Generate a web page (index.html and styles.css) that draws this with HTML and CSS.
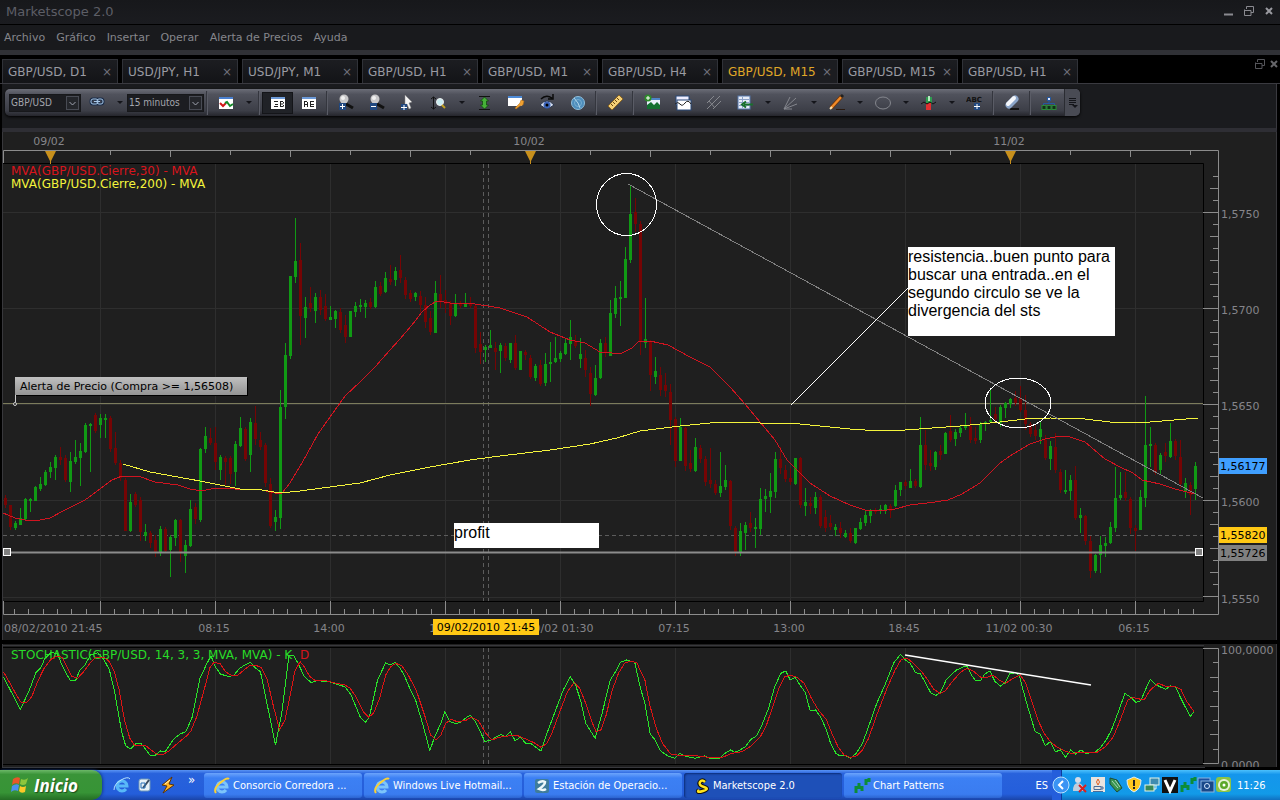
FILE: index.html
```html
<!DOCTYPE html>
<html lang="es">

<head>
    <meta charset="UTF-8">
    <meta name="viewport" content="width=device-width, initial-scale=1.0">
    <title>Marketscope 2.0</title>
    <link rel="stylesheet" href="styles.css">
</head>

<body>
    <header class="titlebar">
        <h1>Marketscope 2.0</h1>
        <div class="window-buttons">
            <button aria-label="Minimizar"><svg width="12" height="12"><path d="M1 9.500h9" stroke="#8a8a90" stroke-width="2"/></svg></button>
            <button aria-label="Restaurar"><svg width="12" height="12"><path d="M3.500 4V1.500h7v6H8M1 5.500h7v5H1.500v-6" fill="none" stroke="#8a8a90"/></svg></button>
            <button aria-label="Cerrar"><svg width="12" height="12"><path d="M3 3l6 6M9 3l-6 6" stroke="#9a9aa0" stroke-width="2"/></svg></button>
        </div>
    </header>

    <nav class="menubar">
        <a href="#">Archivo</a>
        <a href="#">Gráfico</a>
        <a href="#">Insertar</a>
        <a href="#">Operar</a>
        <a href="#">Alerta de Precios</a>
        <a href="#">Ayuda</a>
    </nav>

    <div class="tabs">
        <div class="tab"><a href="#">GBP/USD, D1</a><button aria-label="Cerrar">×</button></div>
        <div class="tab"><a href="#">USD/JPY, H1</a><button aria-label="Cerrar">×</button></div>
        <div class="tab"><a href="#">USD/JPY, M1</a><button aria-label="Cerrar">×</button></div>
        <div class="tab"><a href="#">GBP/USD, H1</a><button aria-label="Cerrar">×</button></div>
        <div class="tab"><a href="#">GBP/USD, M1</a><button aria-label="Cerrar">×</button></div>
        <div class="tab"><a href="#">GBP/USD, H4</a><button aria-label="Cerrar">×</button></div>
        <div class="tab active"><a href="#">GBP/USD, M15</a><button aria-label="Cerrar">×</button></div>
        <div class="tab"><a href="#">GBP/USD, M15</a><button aria-label="Cerrar">×</button></div>
        <div class="tab"><a href="#">GBP/USD, H1</a><button aria-label="Cerrar">×</button></div>
        <div class="tabs-buttons">
            <button aria-label="Restaurar gráfico"><svg width="12" height="12"><path d="M3.500 4V1.500h7v6H8M1 5.500h7v5H1.500v-6" fill="none" stroke="#55555a"/></svg></button>
            <button aria-label="Cerrar gráfico"><svg width="12" height="12"><path d="M3 3l6 6M9 3l-6 6" stroke="#66666a" stroke-width="2"/></svg></button>
        </div>
    </div>

    <div class="toolbar-area">
        <div class="toolbar">
            <span class="combo combo-symbol">
                <select aria-label="Símbolo"><option>GBP/USD</option><option>USD/JPY</option></select>
                <svg width="13" height="14"><rect x=".5" y=".5" width="12" height="13" fill="#24262b" stroke="#484b54"/><path d="M3.500 6l3 3 3-3" fill="none" stroke="#a0a4b0"/></svg>
            </span>
            <button class="tool" aria-label="Vincular"><svg width="18" height="18"><g fill="none" stroke="#1a2c48" stroke-width="3"><rect x="3" y="5" width="7" height="5" rx="2"/><rect x="9" y="5" width="6" height="5" rx="2"/></g><g fill="none" stroke="#a8c8e8"><rect x="3" y="5" width="7" height="5" rx="2"/><rect x="9" y="5" width="6" height="5" rx="2"/><path d="M6 7.500h6"/></g></svg></button>
            <button class="drop" aria-label="Opciones de vínculo"></button>
            <span class="combo combo-period">
                <select aria-label="Periodo"><option>15 minutos</option><option>1 hora</option></select>
                <svg width="13" height="14"><rect x=".5" y=".5" width="12" height="13" fill="#24262b" stroke="#484b54"/><path d="M3.500 6l3 3 3-3" fill="none" stroke="#a0a4b0"/></svg>
            </span>
            <span class="sep"></span>
            <button class="tool" aria-label="Tipo de gráfico"><svg width="18" height="18"><rect x="2" y="3" width="14" height="12" fill="#fff"/><rect x="2" y="3" width="14" height="2" fill="#4a80d0"/><path d="M3 9l3 3 3-3" fill="none" stroke="#d01818" stroke-width="2"/><path d="M8 9l2-1 3 4 3-2" fill="none" stroke="#128a28" stroke-width="2"/></svg></button>
            <button class="drop" aria-label="Más tipos"></button>
            <span class="sep"></span>
            <button class="tool pressed" aria-label="Precio de venta"><svg width="18" height="18"><rect x="2" y="3" width="14" height="12" fill="#fff"/><path d="M2 4h14" stroke="#6c9ad8" stroke-width="2"/><path d="M5 7.500h4M6 10.500h3M5 12.500h4M11.500 7v6M11 7.500h3M11 10h3M11 12.500h3M14.500 8v1.500M14.500 11v1.500" stroke="#222"/></svg></button>
            <button class="tool" aria-label="Precio de compra"><svg width="18" height="18"><rect x="2" y="3" width="14" height="12" fill="#fff"/><path d="M2 4h14" stroke="#6c9ad8" stroke-width="2"/><path d="M4.500 13V8M4 7.500h3M7.500 8v5M4 10.500h4M10.500 7v6M11 7.500h3M11 10.500h3M11 12.500h3" stroke="#222"/></svg></button>
            <span class="sep"></span>
            <button class="tool" aria-label="Acercar"><svg width="18" height="18"><path d="M9 10l7 4" stroke="#111" stroke-width="3"/><circle cx="7" cy="5" r="4.500" fill="#c8c8ca"/><circle cx="6" cy="4" r="2" fill="#f0f0f0"/><rect x="2" y="9" width="7" height="7" fill="#204880"/><path d="M3 12.500h5M5.500 10v5" stroke="#fff"/></svg></button>
            <button class="tool" aria-label="Alejar"><svg width="18" height="18"><path d="M9 10l7 4" stroke="#111" stroke-width="3"/><circle cx="7" cy="5" r="4.500" fill="#c8c8ca"/><circle cx="6" cy="4" r="2" fill="#f0f0f0"/><rect x="2" y="9" width="7" height="7" fill="#204880"/><path d="M3 12.500h5" stroke="#fff"/></svg></button>
            <button class="tool" aria-label="Cursor"><svg width="18" height="18"><path d="M6 1l7 7-3 1 2 5-2 1-2-5-2 1z" fill="#f4f4f4" stroke="#888" stroke-width=".5"/><rect x="2" y="10" width="6" height="6" fill="#204880"/><path d="M2 13.500h6M5 11v5" stroke="#fff"/></svg></button>
            <button class="tool" aria-label="Escala vertical"><svg width="18" height="18"><path d="M3.500 3v12M1 5l2.500-2L6 5M1 13l2.500 2L6 13" fill="none" stroke="#111"/><circle cx="10" cy="8" r="3.500" fill="#c8ecf0" stroke="#eee"/><path d="M12 11l3 3" stroke="#c0a020" stroke-width="2"/></svg></button>
            <button class="drop" aria-label="Más escalas"></button>
            <button class="tool" aria-label="Ajustar"><svg width="18" height="18"><path d="M3 2.500h11M3 15.500h11" stroke="#111"/><path d="M8.500 3l4 4h-2v4h2l-4 4-4-4h2V7h-2z" fill="#46b038" stroke="#0c4808" stroke-width=".7"/></svg></button>
            <button class="tool" aria-label="Propiedades"><svg width="18" height="18"><rect x="1" y="2" width="14" height="10" fill="#fff"/><rect x="1" y="2" width="14" height="2" fill="#4d8bd8"/><path d="M8 14l5-5 1-3 3 1-1 4-3 1-4 3z" fill="#f0a030" stroke="#b06a10" stroke-width=".5"/></svg></button>
            <button class="tool" aria-label="Mostrar"><svg width="18" height="18"><path d="M2 11q7-8 14 0-7 6-14 0z" fill="#d8e0f0" stroke="#28344c"/><circle cx="9" cy="11" r="3.500" fill="#3c64b8"/><circle cx="9" cy="11" r="1.500" fill="#000"/><path d="M3 5q5-5 11-1M15 0v5h-5" fill="none" stroke="#0a0a0a" stroke-width="1.500"/></svg></button>
            <button class="tool" aria-label="Radar"><svg width="18" height="18"><circle cx="9" cy="9" r="6.500" fill="#4d8dbc" stroke="#8fbedb"/><circle cx="9" cy="9" r="3.500" fill="none" stroke="#78aed0"/><path d="M9 9L5 4M9 9l2 5" stroke="#b4d8ec"/></svg></button>
            <span class="sep"></span>
            <button class="tool" aria-label="Regla"><svg width="18" height="18"><path d="M2 12L13 1l4 4L6 16z" fill="#f4d078" stroke="#8a6420"/><path d="M5 10l2 2M7 8l2 2M9 6l2 2M11 4l2 2" stroke="#6a4810"/></svg></button>
            <span class="sep"></span>
            <button class="tool" aria-label="Agregar indicador"><svg width="18" height="18"><rect x="4" y="4" width="13" height="11" fill="#e8f0fa"/><rect x="8" y="4" width="9" height="2" fill="#4d84c8"/><path d="M4 15v-4l4-3 3 3 3-3 3 3v4z" fill="#127030"/><circle cx="5" cy="4" r="3.500" fill="#2c8c28"/><path d="M3 4h4M5 2v4" stroke="#fff"/></svg></button>
            <button class="tool" aria-label="Ventana de datos"><svg width="18" height="18"><rect x="2" y="2" width="13" height="9" fill="#eef" stroke="#284878"/><rect x="3" y="6" width="14" height="10" fill="#fff" stroke="#284878"/><path d="M1 10q3-3 5 0t5-1 6 1" fill="none" stroke="#222"/></svg></button>
            <button class="tool" aria-label="Horquilla"><svg width="18" height="18"><path d="M2 15L15 2M2 9l7-7M8 15l8-8M4 7l6 7" stroke="#86888e" fill="none"/></svg></button>
            <button class="tool" aria-label="Fibonacci"><svg width="18" height="18"><rect x="2" y="2" width="12" height="13" fill="#e6ecf8" stroke="#5577aa"/><path d="M3 5.500h10M3 8.500h10M3 11.500h10M6.500 3v11" stroke="#8ca2c8"/><path d="M17 10.500H8M10 7.500l-4 3 4 3" fill="none" stroke="#18702c" stroke-width="2"/></svg></button>
            <button class="drop" aria-label="Más Fibonacci"></button>
            <button class="tool" aria-label="Abanico"><svg width="18" height="18"><path d="M2 15L8 3M2 15L14 4M2 15l13-5M2 15h8" stroke="#85878e"/></svg></button>
            <button class="drop" aria-label="Más abanicos"></button>
            <button class="tool" aria-label="Línea"><svg width="18" height="18"><path d="M8 15.500h9" stroke="#2a1a10"/><path d="M3 14L14 2" stroke="#703408" stroke-width="4"/><path d="M3 14L14 2" stroke="#f08a28" stroke-width="2.500"/><path d="M13 3l2-2" stroke="#222" stroke-width="3"/><path d="M2 15l2-2" stroke="#f8e0b0" stroke-width="2"/></svg></button>
            <button class="drop" aria-label="Más líneas"></button>
            <button class="tool" aria-label="Elipse"><svg width="18" height="18"><ellipse cx="9" cy="9" rx="7.500" ry="6" fill="none" stroke="#85878e"/></svg></button>
            <button class="drop" aria-label="Más formas"></button>
            <button class="tool" aria-label="Señales"><svg width="18" height="18"><path d="M6 3h6v7H6z" fill="#2e9c50"/><path d="M9 2v5" stroke="#b8e8c0" stroke-width="2"/><path d="M6 9h5v7H6z" fill="#e03030"/><path d="M1 10l3-2 3 2 3-2 3 2 3-2" fill="none" stroke="#111"/></svg></button>
            <button class="drop" aria-label="Más señales"></button>
            <button class="tool" aria-label="Texto"><svg width="18" height="18"><text x="0" y="8" class="abc">ABC</text><rect x="8" y="9" width="6" height="7" fill="#204880"/><path d="M8 12.500h6M11 10v5" stroke="#fff"/></svg></button>
            <span class="sep"></span>
            <button class="tool" aria-label="Borrar"><svg width="18" height="18"><path d="M7 15h9" stroke="#111" stroke-width="2"/><path d="M6 11l6-6" stroke="#8aa4c8" stroke-width="7" stroke-linecap="round"/><path d="M5 10l6-6" stroke="#f4f6fa" stroke-width="4" stroke-linecap="round"/></svg></button>
            <span class="sep"></span>
            <button class="tool" aria-label="Organizar"><svg width="18" height="18"><path d="M9 7v3M3.500 12V9.500h11V12" fill="none" stroke="#2458a0"/><rect x="7.500" y="3.500" width="3" height="3" fill="#dde8ff" stroke="#2458a0"/><g fill="#123018" stroke="#2a8a38"><rect x="2" y="11.500" width="4" height="4"/><rect x="7" y="11.500" width="4" height="4"/><rect x="12" y="11.500" width="4" height="4"/></g></svg></button>
            <button class="tool-more" aria-label="Más herramientas"><svg width="10" height="14"><path d="M1 2.500h7M1 4.500h7M1 6.500h7M1 8.500h5" stroke="#14151a"/><path d="M4 9h6l-3 3z" fill="#14151a"/></svg></button>
        </div>
    </div>

    <main>
        <svg class="chart" viewBox="0 132 1280 508" role="img" aria-label="Gráfico GBP/USD M15">
            <rect x="0" y="132" width="1280" height="508" fill="#000"/>
            <rect x="2" y="132" width="1275" height="508" fill="#1f1f1f"/>
            <path class="edge" d="M2.500 132v508M1276.500 132v508"/>
            <g id="grid" class="grid"></g>
            <path class="frame" d="M3 163.500h1200.500v438H3"/>
            <g id="axis" class="axis"></g>
            <g id="day-marks"></g>

            <path class="crosshair" d="M483.500 164v437M488.500 164v437M3 535.500h1200"/>
            <path class="alert-line" d="M3 403.500h1200"/>
            <g id="candles" class="candles"></g>

            <polyline class="ma-fast" points="3,513 15,518 25,520 35,521 50,518 65,510 85,500 100,489 112,480 122,476 138,476 155,482 178,485 190,489 202,491 215,488 235,489 262,490 275,493 282,493 290,483 302,463 318,434 330,417 345,396 360,382 375,367 390,350 400,339 412,325 422,312 430,305 437,301 450,303 475,304 500,308 527,317 550,332 570,340 585,343 600,352 612,353 622,353 632,348 638,342 650,341 668,345 690,357 710,367 730,387 745,404 760,422 775,440 787,460 797,470 810,483 830,496 850,505 865,510 880,511 895,509 910,505 935,502 948,500 962,494 980,483 1000,463 1013,454 1030,444 1045,439 1060,436 1070,437 1085,442 1105,459 1120,467 1133,473 1142,480 1160,484 1175,489 1195,494"/>
            <polyline class="ma-slow" points="123,464 150,472 200,481 240,489 262,490 280,493 300,491 330,487 360,483 390,475 430,467 470,460 500,456 550,450 590,444 617,438 640,431 680,426 710,423 735,422 760,423 790,423 850,429 880,431 905,430 960,426 1000,422 1025,419 1050,418 1085,419 1110,422 1150,422 1198,418"/>

            <path class="trend" d="M628 184L1203 498"/>
            <path class="pointer" d="M791 405L908 288"/>
            <ellipse class="ring" cx="626.500" cy="204.500" rx="30" ry="31"/>
            <ellipse class="ring" cx="1018" cy="403" rx="33" ry="25"/>

            <path class="profit-line" d="M3 552.500h1200"/>
            <rect class="handle" x="3.500" y="548.500" width="7" height="7"/>
            <rect class="handle" x="1195.500" y="548.500" width="7" height="7"/>

            <rect x="908" y="247" width="207" height="89" fill="#fff"/>
            <text class="note" x="908" y="262">resistencia..buen punto para</text>
            <text class="note" x="908" y="280">buscar una entrada..en el</text>
            <text class="note" x="908" y="298">segundo circulo se ve la</text>
            <text class="note" x="908" y="316">divergencia del sts</text>
            <rect x="454" y="523" width="145" height="25" fill="#fff"/>
            <text class="note" x="454" y="538">profit</text>

            <linearGradient id="alert-bg" x2="0" y2="1"><stop stop-color="#c0c0c0"/><stop offset="1" stop-color="#949494"/></linearGradient>
            <rect x="16" y="378" width="232" height="18" fill="#000"/>
            <rect x="15" y="377" width="232" height="18" fill="url(#alert-bg)"/>
            <text class="label dark" x="20" y="390">Alerta de Precio (Compra &gt;= 1,56508)</text>
            <path d="M15.500 395v7" stroke="#ccc"/>
            <circle cx="15" cy="404" r="1.500" fill="#1f1f1f" stroke="#ccc"/>

            <text class="legend red" x="11" y="175">MVA(GBP/USD.Cierre,30) - MVA</text>
            <text class="legend yellow" x="11" y="188">MVA(GBP/USD.Cierre,200) - MVA</text>

            <g id="labels" class="label"></g>

            <rect x="1219" y="458" width="48" height="16" fill="#409fff"/>
            <text class="label dark" x="1220" y="470">1,56177</text>
            <rect x="1219" y="527" width="48" height="16" fill="#ffc814"/>
            <text class="label dark" x="1220" y="539">1,55820</text>
            <rect x="1219" y="545" width="48" height="16" fill="#808080"/>
            <text class="label dark" x="1220" y="557">1,55726</text>
            <rect x="433" y="619" width="106" height="16" fill="#ffc814"/>
            <text class="label dark middle" x="486" y="631">09/02/2010 21:45</text>
        </svg>

        <svg class="chart" viewBox="0 640 1280 130" role="img" aria-label="Estocástico">
            <rect x="0" y="640" width="1280" height="130" fill="#000"/>
            <rect x="2" y="644" width="1275" height="123" fill="#1f1f1f"/>
            <path class="edge" d="M2.500 644v123M1276.500 644v123M2 645.500h1202M2 767.500h1275"/>
            <g id="stoch-grid" class="grid"></g>
            <path class="frame" d="M3 647.500h1200.500v117H3"/>
            <g id="stoch-axis" class="axis"></g>
            <path class="crosshair" d="M483.500 648v116M488.500 648v116"/>
            <text class="legend green" x="11" y="659">STOCHASTIC(GBP/USD, 14, 3, 3, MVA, MVA) - K</text>
            <text class="legend red" x="300" y="659">D</text>

            <g transform="translate(0 600) scale(.4082 .3333)">
                <polyline class="stoch-k" points="8,230 50,328 72,270 88,218 100,203 110,175 125,158 140,160 150,190 162,220 173,242 185,242 195,212 208,195 222,165 240,158 255,180 268,210 280,270 290,340 298,395 308,438 320,447 332,432 345,430 355,445 368,466 380,466 393,453 405,455 425,418 440,403 455,395 470,355 490,235 507,190 517,168 527,200 540,222 560,230 573,225 587,205 600,195 613,187 625,203 638,215 675,435 690,340 708,165 720,168 730,190 745,228 762,248 775,242 805,245 830,255 845,260 860,285 882,350 895,368 905,350 925,240 945,188 955,195 968,187 980,205 990,225 1005,268 1018,300 1035,370 1053,452 1065,410 1080,370 1090,335 1102,365 1115,370 1128,368 1140,355 1152,345 1165,365 1188,425 1203,420 1227,403 1238,410 1250,395 1262,422 1275,412 1288,430 1300,430 1325,453 1340,400 1362,328 1380,270 1397,230 1410,255 1422,300 1435,370 1458,415 1475,340 1495,240 1508,215 1520,187 1535,180 1555,187 1568,260"/>
                <polyline class="stoch-d" points="8,215 20,240 38,280 52,308 65,308 78,290 92,245 108,205 125,178 140,168 152,172 162,195 175,228 190,235 205,215 220,190 235,172 255,172 268,185 280,215 292,270 305,360 318,415 330,437 345,435 358,438 372,452 385,463 400,463 415,452 430,435 455,410 467,395 482,350 500,270 515,200 525,187 540,192 552,215 570,228 583,225 598,210 610,198 625,195 640,203 655,240 670,320 685,390 698,360 712,280 722,215 735,185 745,200 758,228 770,240 800,243 825,250 845,255 858,265 872,290 890,335 903,352 915,340 930,295 945,225 957,200 970,190 985,198 1000,225 1020,272 1040,345 1055,405 1068,420 1080,405 1092,370 1105,358 1120,365 1140,362 1155,352 1172,362 1190,400 1205,420 1222,412 1245,408 1270,408 1290,418 1308,428 1325,442 1340,430 1352,400 1370,340 1390,275 1407,247 1420,265 1435,310 1450,365 1460,395 1472,390 1485,345 1500,270 1515,220 1530,190 1545,183 1560,188 1568,210"/>
            </g>
            <g transform="translate(640 600) scale(.4082 .3333)">
                <polyline class="stoch-k" points="0,260 12,310 25,402 37,420 50,452 68,468 85,475 98,460 110,468 135,475 158,468 172,475 195,475 208,460 222,450 232,457 245,450 258,440 272,418 285,408 297,380 315,325 330,260 345,220 357,213 368,240 380,232 392,255 405,278 417,333 430,330 442,350 455,385 467,430 480,460 490,468 505,468 515,475 530,460 545,430 560,380 580,310 600,255 622,188 638,163 650,180 662,190 675,218 687,222 700,250 712,278 725,286 737,275 750,240 775,210 800,197 812,225 822,242 835,240 845,222 857,213 870,245 883,258 895,248 905,222 920,218 930,230 945,300 968,395 980,402 993,437 1005,425 1018,455 1030,450 1042,472 1055,450 1067,462 1080,450 1092,460 1115,457 1130,440 1142,420 1155,390 1172,335 1188,280 1202,292 1215,307 1227,302 1238,270 1250,238 1262,253 1287,268 1300,258 1312,260 1325,295 1348,350 1357,335"/>
                <polyline class="stoch-d" points="0,210 12,240 25,320 40,385 55,430 75,462 95,466 130,466 160,471 200,473 225,460 250,455 270,440 295,410 310,375 325,320 340,265 355,230 368,226 385,232 402,250 420,295 437,330 457,360 470,400 485,440 500,465 515,472 530,468 545,450 560,415 580,345 605,265 625,210 640,178 655,175 670,190 690,215 705,240 720,268 735,280 748,272 765,245 785,217 800,206 815,212 835,232 850,232 865,225 880,240 895,250 910,238 932,225 945,250 960,305 975,360 990,400 1005,425 1020,440 1040,452 1055,460 1080,458 1120,457 1140,440 1160,410 1178,355 1195,300 1208,293 1235,300 1250,270 1270,250 1290,260 1312,260 1325,268 1340,305 1357,335"/>
            </g>
            <path d="M905 655L1091 685" stroke="#fff" stroke-width="1.500"/>

            <g class="label">
                <text x="1221" y="654">100,0000</text>
                <text x="1221" y="769">0,0000</text>
            </g>
            <rect x="1205" y="767" width="75" height="3" fill="#000"/>
        </svg>
    </main>

    <footer class="taskbar">
        <button class="start">
            <svg width="20" height="20" viewBox="0 0 20 20"><path d="M3 4q4-3 7-1L9 9Q5 7 2 10z" fill="#e8562a"/><path d="M11 4q4 2 7-1l-2 6q-3 2-6 0z" fill="#8cc63c"/><path d="M2 11q4-3 7-1l-1 6q-4-2-7 1z" fill="#4a90f0"/><path d="M10 11q3 2 6 0l-1 6q-4 2-6-1z" fill="#fcc828"/></svg>
            Inicio
        </button>
        <div class="quick">
            <button aria-label="Internet Explorer"><svg width="18" height="18"><path d="M4 10h10a5 5 0 1 0-1 3" fill="none" stroke="#58b8f8" stroke-width="3"/><path d="M1 14Q1 8 8 4t9-1" fill="none" stroke="#b8e4ff"/></svg></button>
            <button aria-label="Escritorio"><svg width="18" height="18"><rect x="3" y="3" width="11" height="12" rx="2" fill="#e8f2f8" stroke="#6a94b8"/><path d="M7 12l6-8" stroke="#3a4c60" stroke-width="2"/><path d="M5 7h4v5H5z" fill="none" stroke="#2870b8"/></svg></button>
            <button aria-label="Winamp"><svg width="18" height="18"><path d="M13 1L3 9l5 1-4 7L15 9l-5-1z" fill="#ffb428" stroke="#5c3408"/><path d="M11 4L6 8" stroke="#fff4c0"/></svg></button>
            <span class="chevron">»</span>
        </div>
        <nav class="tasks">
            <button><svg width="18" height="18"><path d="M5 10h9a5 5 0 1 0-1 3" fill="none" stroke="#7cc4fa" stroke-width="3"/><path d="M3 16Q0 12 7 6t9-4" fill="none" stroke="#f8d038" stroke-width="2"/></svg>Consorcio Corredora ...</button>
            <button><svg width="18" height="18"><path d="M5 10h9a5 5 0 1 0-1 3" fill="none" stroke="#7cc4fa" stroke-width="3"/><path d="M3 16Q0 12 7 6t9-4" fill="none" stroke="#f8d038" stroke-width="2"/></svg>Windows Live Hotmail...</button>
            <button><svg width="18" height="18"><rect x="2" y="2" width="14" height="14" rx="2" fill="#3f7c9c"/><path d="M5 6q4-3 7-1 0 3-6 7 4 2 7 0" fill="none" stroke="#eef8fa" stroke-width="2.500"/></svg>Estación de Operacio...</button>
            <button class="active"><svg width="18" height="18"><path d="M12 5Q9 2 7 5t4 5-1 4-4-1" fill="none" stroke="#111" stroke-width="4.500"/><path d="M12 5Q9 2 7 5t4 5-1 4-4-1" fill="none" stroke="#ffe41c" stroke-width="2.500"/></svg>Marketscope 2.0</button>
            <button><svg width="18" height="18"><path d="M3 9v7M6 6v6M9 9v5M13 2v6M16 1v4" stroke="#0c8c38" stroke-width="3"/></svg>Chart Patterns</button>
        </nav>
        <span class="lang">ES</span>
        <div class="tray">
            <button class="tray-toggle" aria-label="Mostrar iconos"><svg width="18" height="18"><circle cx="9" cy="9" r="8" fill="#3a94f4" stroke="#b8e0ff"/><path d="M11 5L7 9l4 4" fill="none" stroke="#fff" stroke-width="2"/></svg></button>
            <svg width="18" height="18"><circle cx="7" cy="4" r="3" fill="#d4dce8"/><path d="M2 15q0-8 5-8t6 8z" fill="#c0cedd"/><path d="M8 9l7 7M15 9l-7 7" stroke="#d82020" stroke-width="2"/></svg>
            <svg width="18" height="18"><rect x="2" y="1" width="14" height="15" fill="#e8e4e0"/><path d="M9 3q-3 3 0 6 3-3 0-6" fill="none" stroke="#e06020"/><path d="M5 10.500h7v3H5zM12 11h2v2h-2M4 15.500h10" fill="none" stroke="#4a6c98"/></svg>
            <svg width="18" height="18"><path d="M3 2l7 2 5 8-5 4-7-8z" fill="#3a9450" stroke="#1e4c38"/><path d="M5 5l6 7M8 4l5 7" stroke="#a8d8b8"/></svg>
            <svg width="18" height="18"><path d="M9 1l7 3q0 9-7 12Q2 13 2 4z" fill="#ffc820" stroke="#d8ecff"/><path d="M9 4v6M9 11v2" stroke="#222" stroke-width="2"/></svg>
            <svg width="18" height="18"><rect x="7" y="2" width="9" height="7" fill="#408cb0" stroke="#e4f4e8"/><rect x="2" y="9" width="9" height="6" fill="#388858" stroke="#e4f4e8"/><path d="M13 9v4h-2" stroke="#e4f4e8" fill="none"/></svg>
            <svg width="18" height="18"><rect x="1" y="1" width="16" height="16" fill="#111"/><path d="M4 4l5 11 5-11" fill="none" stroke="#fff" stroke-width="3"/></svg>
            <svg width="18" height="18"><path d="M3 9v7M6 6v6M9 9v5M13 2v6M16 1v4" stroke="#0c8c38" stroke-width="3"/></svg>
            <svg width="18" height="18"><rect x="1" y="2" width="12" height="11" fill="#1c50a0" stroke="#88b4e0"/><rect x="4" y="5" width="13" height="11" fill="#184888" stroke="#88b4e0"/><circle cx="10" cy="10" r="2.500" fill="none" stroke="#d4e8ff"/></svg>
            <svg width="18" height="18"><rect x="1" y="1" width="15" height="15" rx="3" fill="#8cc444"/><circle cx="9" cy="9" r="6" fill="#e8f4d8"/><circle cx="9" cy="9" r="4" fill="#5ca828"/><circle cx="9" cy="9" r="1.500" fill="#fff"/></svg>
            <time class="clock">11:26</time>
        </div>
    </footer>

    <script src="script.js"></script>
</body>

</html>
```

FILE: styles.css
```css
* {
    box-sizing: border-box;
}

body {
    margin: 0;
    background-color: #000;
    color: #8f9096;
    font-family: "DejaVu Sans", Verdana, sans-serif;
    font-size: 11px;
}

button {
    padding: 0;
    border: 0;
    background: none;
    color: inherit;
    font: inherit;
    cursor: pointer;
}

a {
    color: inherit;
    text-decoration: none;
}

svg {
    display: block;
}

/* cabecera */
.titlebar {
    display: flex;
    align-items: center;
    justify-content: space-between;
    height: 25px;
    padding: 0 5px 2px 6px;
    background: linear-gradient(#17181b, #1b1c20);
    border-bottom: 1px solid #000;
}

.titlebar h1 {
    margin: 0;
    color: #5d5e66;
    font-size: 13px;
    font-weight: normal;
}

.window-buttons {
    display: flex;
    gap: 8px;
}

.menubar {
    display: flex;
    align-items: center;
    gap: 11px;
    height: 30px;
    padding: 0 4px;
    background-color: #191a1d;
    border-bottom: 5px solid #303136;
    color: #85868c;
}

.tabs {
    display: flex;
    align-items: flex-end;
    gap: 4px;
    height: 29px;
    padding: 0 0 0 2px;
    border-bottom: 1px solid #3a3a40;
}

.tab {
    display: flex;
    align-items: center;
    justify-content: space-between;
    width: 116px;
    height: 24px;
    padding: 0 5px;
    background: linear-gradient(#1c1d21, #131417);
    border: 1px solid #303238;
    border-bottom: 0;
    color: #9a9ba2;
    font-size: 12px;
}

.tab button {
    color: #70717a;
}

.tab.active {
    color: #e0a828;
    background: #1c1d21;
}

.tabs-buttons {
    display: flex;
    align-self: center;
    gap: 2px;
    margin: 0 0 10px auto;
}

/* barra de herramientas */
.toolbar-area {
    height: 48px;
    padding: 5px 0 0 3px;
    margin: 0 3px 0 2px;
    background-color: #1a1b1e;
    border-right: 1px solid #3a3a40;
    border-bottom: 4px solid #2e2e34;
}

.toolbar {
    display: flex;
    align-items: center;
    width: max-content;
    height: 27px;
    padding-left: 4px;
    background: linear-gradient(#6b6d77, #50525c 20%, #3c3e47 80%, #25262c);
    border-radius: 5px;
    box-shadow: 0 1px 3px #000;
}

.combo {
    display: flex;
    position: relative;
    height: 18px;
    background-color: #1c1d21;
    border: 1px solid #17181b;
}

.combo-symbol {
    width: 72px;
}

.combo-period {
    width: 77px;
}

.combo select {
    width: 100%;
    padding: 0 0 0 1px;
    border: 0;
    background: none;
    color: #a4a6ae;
    font-family: "DejaVu Sans Condensed", "DejaVu Sans", Tahoma, sans-serif;
    font-size: 10px;
    appearance: none;
}

.combo svg {
    position: absolute;
    top: 1px;
    right: 1px;
    pointer-events: none;
}

.tool {
    display: grid;
    place-items: center;
    width: 31px;
    height: 22px;
}

.tool.pressed {
    background-color: #202227;
    border: 1px solid #141519;
}

.drop {
    display: grid;
    place-items: center;
    width: 15px;
    height: 22px;
}

.drop::before {
    content: "";
    border: 3px solid transparent;
    border-top-color: #14151a;
    border-bottom: 0;
}

.sep {
    width: 6px;
    height: 24px;
    background: linear-gradient(90deg, transparent 2px, #34363e 2px, #34363e 3px, #5a5c66 3px, #5a5c66 4px, transparent 4px);
}

.tool-more {
    display: grid;
    place-items: center;
    width: 16px;
    height: 27px;
    background-color: #494b54;
    border-left: 1px solid #2a2c32;
    border-radius: 0 5px 5px 0;
}

.abc {
    fill: #111;
    font: bold 7px "DejaVu Sans", sans-serif;
}

/* graficos */
.chart {
    width: 100%;
    height: auto;
    font-family: "DejaVu Sans", Verdana, sans-serif;
    font-size: 11px;
}

.edge {
    stroke: #38383c;
}

.grid {
    stroke: #2e2e2e;
}

.axis {
    stroke: #8c8c8c;
}

.frame {
    fill: none;
    stroke: #000;
}

.crosshair {
    stroke: #5c5c5c;
    stroke-dasharray: 4 3;
}

.alert-line {
    stroke: #7c7c5c;
}

.candles,
.ma-fast,
.ma-slow,
.trend,
.pointer,
.ring,
.stoch-k,
.stoch-d {
    shape-rendering: crispEdges;
}

.up {
    fill: #109a14;
}

.down {
    fill: #760404;
}

.ma-fast,
.ma-slow {
    fill: none;
    stroke: #d01420;
}

.ma-slow {
    stroke: #f4f43c;
}

.trend {
    stroke: #808080;
}

.pointer {
    stroke: #fff;
}

.ring {
    fill: none;
    stroke: #fff;
}

.profit-line {
    stroke: #8c8c8c;
    stroke-width: 2;
}

.handle {
    fill: #808080;
    stroke: #fff;
}

.note {
    fill: #000;
    font-family: "Liberation Sans", Arial, sans-serif;
    font-size: 16px;
}

.label {
    fill: #85858a;
}

.legend {
    font-size: 12px;
}

.middle {
    text-anchor: middle;
}

.dark {
    fill: #000;
}

.red {
    fill: #d8141c;
}

.yellow {
    fill: #f4f43c;
}

.green {
    fill: #28dc28;
}

.stoch-k,
.stoch-d {
    fill: none;
    stroke: #28e628;
    vector-effect: non-scaling-stroke;
}

.stoch-d {
    stroke: #dc1414;
}

/* barra de tareas */
.taskbar {
    display: flex;
    align-items: stretch;
    height: 30px;
    background: linear-gradient(#5a94f4, #2862dc 12%, #245edb 80%, #1a44a8);
    color: #fff;
    font-family: "DejaVu Sans Condensed", "DejaVu Sans", Tahoma, sans-serif;
    font-size: 11px;
}

.start {
    display: flex;
    align-items: center;
    gap: 4px;
    width: 102px;
    padding-left: 10px;
    background: linear-gradient(#6cb868, #3a9438 15%, #379436 75%, #246c24);
    border-radius: 0 10px 10px 0;
    box-shadow: 1px 0 3px #143c8c;
    font: italic bold 17px "Open Sans", sans-serif;
    text-shadow: 1px 1px 1px #1c4c1c;
}

.quick {
    display: flex;
    align-items: center;
    gap: 5px;
    width: 102px;
    padding-left: 11px;
}

.chevron {
    margin: 0 0 12px 6px;
    font-size: 13px;
}

.tasks {
    display: flex;
    flex: 1;
    gap: 2px;
    padding: 3px 0 2px;
}

.tasks button {
    display: flex;
    align-items: center;
    flex: 0 1 158px;
    gap: 2px;
    min-width: 0;
    padding-left: 9px;
    background: linear-gradient(#6ca4fc, #3c80f4 20%, #3a7cf0 85%, #2c64d0);
    border-radius: 3px;
    white-space: nowrap;
}

.tasks button.active {
    background: #1e50b8;
    box-shadow: inset 1px 1px 2px #0c2c78;
}

.lang {
    align-self: center;
    margin-right: 4px;
}

.tray {
    display: flex;
    align-items: center;
    width: 228px;
    background: linear-gradient(90deg, #245edb 9px, #0c3c9c 9px, #0c3c9c 10px, transparent 10px), linear-gradient(#4cc0fc, #1496ec 15%, #129ae8 80%, #1070c0);
}

.tray-toggle {
    margin-right: 1px;
}

.clock {
    margin-left: 4px;
}
```

FILE: script.js
```js
// velas desde x=5, una cada 5px: color, maximo, cuerpo arriba, cuerpo abajo, minimo
const velas = `
r495,498,505,508 r505,505,527,530 g521,523,528,530 g508,518,525,525 g498,499,519,521 g498,499,501,512 g486,487,501,501 g477,484,489,491 g470,472,485,486 g462,467,472,478
g455,457,468,480 r447,457,460,465 r455,458,480,482 g452,461,482,492 g440,457,462,464 g443,451,458,486 g423,425,452,453 g423,424,426,472 r413,415,431,433 g414,418,425,438
g414,418,420,438 r416,418,449,452 r432,448,463,465 r460,463,478,481 r478,480,531,531 g494,502,531,532 r492,494,505,507 r497,500,532,541 g524,532,536,541 r531,533,543,548
r535,540,552,557 g526,529,553,556 r527,529,551,552 g535,537,550,577 g519,520,538,546 r519,520,553,562 g540,545,556,573 g500,509,546,547 r503,507,519,524 g448,449,520,522
g427,436,449,453 r428,438,443,445 r427,443,462,470 g455,457,470,480 r456,458,462,485 r456,458,474,484 g441,444,472,486 g417,428,446,447 r427,429,459,461 g418,422,455,472
r406,423,439,445 r432,440,447,450 r443,445,483,487 r478,484,526,528 g510,517,522,531 g390,407,518,529 g343,355,407,419 g276,276,356,359 g218,261,277,283 r243,260,316,345
g297,307,318,338 r287,303,308,312 g293,297,311,323 r290,297,310,315 r294,306,319,321 g306,317,320,320 g310,311,319,328 r308,312,330,333 r315,325,337,343 g311,311,337,337
g302,306,312,317 g299,305,307,312 g300,303,307,318 r298,302,307,309 g281,287,307,308 r282,286,294,296 g272,278,292,293 r265,279,282,285 g267,271,280,286 r255,270,278,283
r277,280,295,299 r290,293,299,302 g292,293,297,301 r291,296,305,312 r297,305,322,328 r311,318,332,335 g281,293,333,333 r275,294,302,308 r290,300,304,313 r301,303,316,325
g294,303,316,317 r301,303,306,308 g293,304,307,307 r297,303,306,308 r304,306,348,353 r332,344,352,364 g345,347,350,362 g330,345,348,348 r342,348,352,370 g343,345,351,373
r343,346,358,361 g343,343,360,363 r335,343,368,370 g351,351,370,370 r350,352,355,360 r355,358,377,379 g364,366,378,381 r360,365,384,386 g353,364,383,386 g342,362,364,382
g337,358,362,363 g351,353,359,362 g338,343,354,355 g320,337,344,360 r335,341,346,348 g338,354,359,368 r350,358,370,377 r367,373,394,406 g365,378,395,396 g339,343,378,379
r337,343,353,357 g300,313,356,356 g286,298,314,318 g281,297,299,326 g247,259,298,298 g185,214,260,263 r198,212,224,232 r221,224,342,355 g298,339,343,348 r340,342,375,391
g357,371,377,384 r367,375,390,396 r373,385,391,397 r384,392,420,445 r417,419,461,467 g418,427,461,461 r427,428,466,471 r450,463,469,472 g438,447,471,472 r445,448,459,463
r456,459,482,486 r448,480,484,488 r480,484,493,495 g452,486,493,497 g465,480,487,490 r480,481,526,530 r526,528,552,556 g523,531,553,556 g522,525,533,550 r512,523,528,532
g518,527,529,548 g488,499,529,535 g489,496,499,512 g473,491,497,513 g452,459,492,498 r447,459,468,474 r465,470,479,482 r468,478,482,485 g458,458,484,485 r457,458,505,508
g488,502,506,516 r497,503,506,514 g492,497,508,514 r495,497,526,528 r510,517,528,532 r515,523,527,530 g524,527,530,536 r522,528,533,538 g530,533,537,538 r528,533,541,543
g528,528,543,544 g518,522,529,530 g510,515,523,526 g509,511,516,523 r508,510,512,514 g505,509,511,514 g504,505,510,514 r504,506,511,518 g485,490,506,507 g482,482,490,496
r480,482,486,489 g469,481,488,488 r479,481,486,488 g417,445,487,488 r430,445,465,470 r450,463,466,471 g451,452,467,470 r445,451,455,460 g432,433,454,454 r415,431,440,442
g429,432,439,446 g426,428,433,437 g413,425,428,430 r417,426,440,443 r427,438,441,444 g422,424,440,443 g421,422,424,431 g388,420,422,423 r407,414,419,423 g405,407,423,427
g402,403,408,418 g398,399,404,408 r391,398,403,406 r386,398,410,412 r395,410,424,430 r422,424,434,437 r425,430,436,440 g422,429,437,444 r435,440,458,460 g441,446,459,470
r433,447,470,473 r469,472,490,493 g470,490,492,494 g475,480,491,500 r466,480,518,520 g508,515,518,533 r515,516,541,545 r536,541,571,578 g554,555,571,573 g536,545,555,573
g537,543,546,557 g522,527,543,544 g467,498,528,532 g472,495,498,500 r472,492,498,501 r497,499,528,534 r525,528,531,551 g490,497,530,530 g396,445,498,507 g427,444,446,467
r443,445,473,475 g453,455,470,475 r443,452,456,462 g423,441,457,458 r439,441,456,460 r440,457,484,488 g478,483,491,498 r482,485,495,515 g462,466,489,500
`;

let html = '';
velas.trim().split(/\s+/).forEach((vela, i) => {
    const x = 5 + i * 5;
    const [alto, arriba, abajo, bajo] = vela.slice(1).split(',').map(Number);
    const clase = vela[0] === 'g' ? 'up' : 'down';
    html += `<rect class="${clase}" x="${x}" y="${alto}" width="1" height="${bajo - alto}"/>`;
    html += `<rect class="${clase}" x="${x - 1}" y="${arriba}" width="3" height="${abajo - arriba}"/>`;
});
document.getElementById('candles').innerHTML = html;

// rejilla
let lineas = '';
let lineasStoch = '';
for (let x = 100.5; x < 1200; x += 115) {
    lineas += `M${x} 164V601`;
    lineasStoch += `M${x} 648V764`;
}
[212.5, 308.5, 404.5, 500.5, 597.5].forEach(y => {
    lineas += `M3 ${y}H1203`;
});
document.getElementById('grid').innerHTML = `<path d="${lineas}"/>`;
document.getElementById('stoch-grid').innerHTML = `<path d="${lineasStoch}"/>`;

// ejes
let ejes = 'M3.500 163V150.500H1218.500V614.500H3.500V601';
for (let x = 110.5, i = 0; x < 1200; x += 60, i++) {
    if (i % 8 !== 7) ejes += `M${x} 151v${i % 2 ? 6 : 4}`;
}
for (let y = 176.5, i = 0; y < 602; y += 12, i++) {
    const largo = i % 8 === 3 ? 15 : (i % 2 ? 8 : 5);
    ejes += `M1218 ${y}h-${largo}`;
}
for (let i = -6; i <= 76; i++) {
    const x = Math.round(100 + i * 14.375) + 0.5;
    ejes += `M${x} 614v-${i % 8 === 0 ? 13 : 5}`;
}
document.getElementById('axis').innerHTML = `<path fill="none" d="${ejes}"/>`;

let ejeStoch = 'M1203 648.500h15.500v115H1203';
for (let i = 1; i < 8; i++) {
    ejeStoch += `M1218 ${Math.round(648 + i * 14.4) + 0.5}h-${i % 2 ? 5 : 8}`;
}
document.getElementById('stoch-axis').innerHTML = `<path fill="none" d="${ejeStoch}"/>`;

// dias y etiquetas
const dias = [[50, '09/02'], [530, '10/02'], [1010, '11/02']];
const horas = [[214, '08:15'], [329, '14:00'], [445, '19:45'], [560, '10/02 01:30'], [674, '07:15'],
    [789, '13:00'], [904, '18:45'], [1019, '11/02 00:30'], [1134, '06:15']];
const precios = [[218, '1,5750'], [314, '1,5700'], [410, '1,5650'], [506, '1,5600'], [603, '1,5550']];

let marcas = '';
let etiquetas = '<text x="4" y="632">08/02/2010 21:45</text>';
dias.forEach(([x, texto]) => {
    marcas += `<path d="M${x - 5} 151h11l-5 10v3h-1v-3z" fill="#c8901c"/>`;
    etiquetas += `<text class="middle" x="${x - 1}" y="145">${texto}</text>`;
});
horas.forEach(([x, texto]) => {
    etiquetas += `<text class="middle" x="${x}" y="632">${texto}</text>`;
});
precios.forEach(([y, texto]) => {
    etiquetas += `<text x="1221" y="${y}">${texto}</text>`;
});
document.getElementById('day-marks').innerHTML = marcas;
document.getElementById('labels').innerHTML = etiquetas;
```
